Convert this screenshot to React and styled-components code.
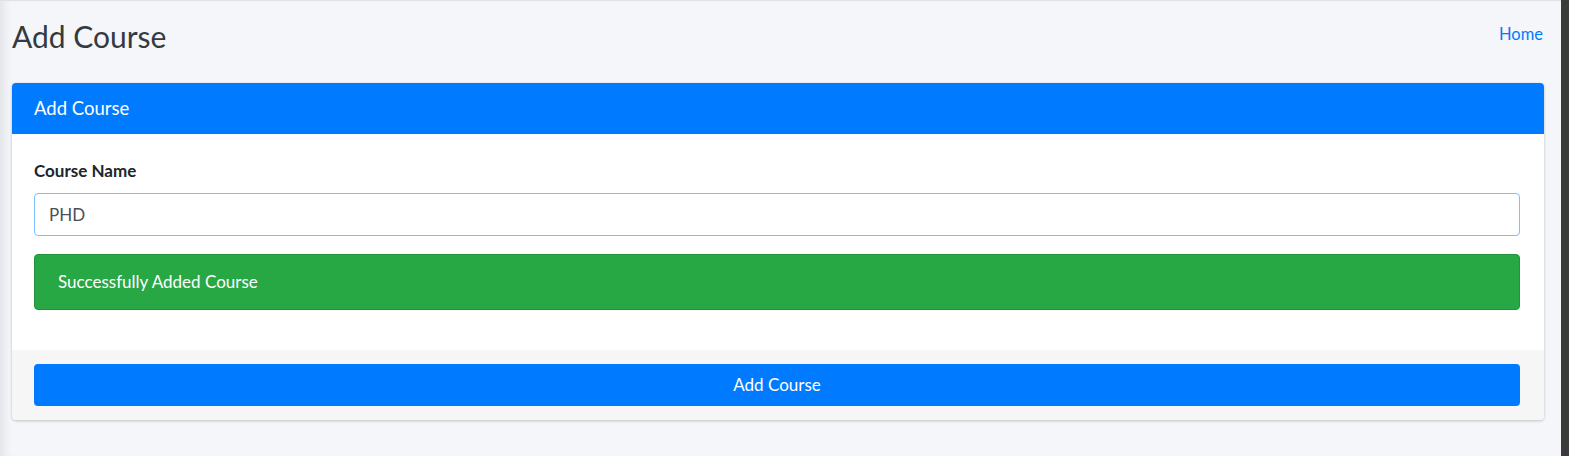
import React from "react";
import styled, { createGlobalStyle } from "styled-components";

const Global = createGlobalStyle`
  html, body { margin: 0; padding: 0; }
  body {
    background: #f4f6f9;
    font-family: "Lato", "Noto Sans", sans-serif;
    color: #212529;
  }
  * { box-sizing: border-box; }
`;

const Page = styled.div`
  display: flex;
  min-height: 456px;
  width: 100%;
`;

const Content = styled.main`
  flex: 1;
  min-width: 0;
  background: #f4f6f9;
  border-top: 1px solid #dfe1e4;
  box-shadow: inset 10px 0 10px -6px rgba(0, 0, 0, 0.08);
`;

const Scrollbar = styled.div`
  width: 8px;
  flex: none;
  background: #3b3b3b;
`;

const TitleRow = styled.div`
  display: flex;
  justify-content: space-between;
  align-items: flex-start;
  padding: 18px 18px 29px 12px;
`;

const Title = styled.h1`
  margin: 0;
  font-size: 30px;
  line-height: 35px;
  font-weight: 400;
  color: #343a40;
`;

const HomeLink = styled.a`
  color: #007bff;
  font-size: 16.5px;
  line-height: 24px;
  margin-top: 3px;
  text-decoration: none;
`;

const Card = styled.section`
  margin: 0 17px 0 12px;
  background: #fff;
  border-radius: 4px;
  box-shadow: 0 0 1px rgba(0, 0, 0, 0.125), 0 1px 3px rgba(0, 0, 0, 0.2);
`;

const CardHeader = styled.header`
  height: 51px;
  display: flex;
  align-items: center;
  padding: 0 22px 2px;
  background: #007bff;
  color: #fff;
  font-size: 18.5px;
  border-radius: 4px 4px 0 0;
`;

const CardBody = styled.div`
  padding: 25px 24px 40px 22px;
`;

const Label = styled.label`
  display: block;
  font-weight: 700;
  font-size: 17px;
  line-height: 24px;
  margin-bottom: 10px;
  color: #212529;
`;

const Input = styled.input`
  display: block;
  width: 100%;
  height: 43px;
  padding: 0 14px;
  border: 1px solid #80bdff;
  border-radius: 4px;
  font-family: inherit;
  font-size: 17px;
  color: #495057;
  background: #fff;
  outline: none;
`;

const Alert = styled.div`
  margin-top: 18px;
  height: 56px;
  display: flex;
  align-items: center;
  padding: 0 23px 1px;
  background: #28a745;
  border: 1px solid #23923d;
  border-radius: 4px;
  color: #fff;
  font-size: 17px;
`;

const CardFooter = styled.footer`
  background: #f6f6f6;
  padding: 14px 24px 14px 22px;
  border-radius: 0 0 4px 4px;
`;

const Button = styled.button`
  display: block;
  width: 100%;
  height: 42px;
  border: none;
  border-radius: 4px;
  background: #007bff;
  color: #fff;
  font-family: inherit;
  font-size: 17px;
  padding: 0 0 1px;
  cursor: pointer;
`;

export default function App() {
  return (
    <>
      <Global />
      <Page>
        <Content>
          <TitleRow>
            <Title>Add Course</Title>
            <HomeLink href="#">Home</HomeLink>
          </TitleRow>
          <Card>
            <CardHeader>Add Course</CardHeader>
            <CardBody>
              <Label htmlFor="course">Course Name</Label>
              <Input id="course" defaultValue="PHD" />
              <Alert>Successfully Added Course</Alert>
            </CardBody>
            <CardFooter>
              <Button type="button">Add Course</Button>
            </CardFooter>
          </Card>
        </Content>
        <Scrollbar />
      </Page>
    </>
  );
}
